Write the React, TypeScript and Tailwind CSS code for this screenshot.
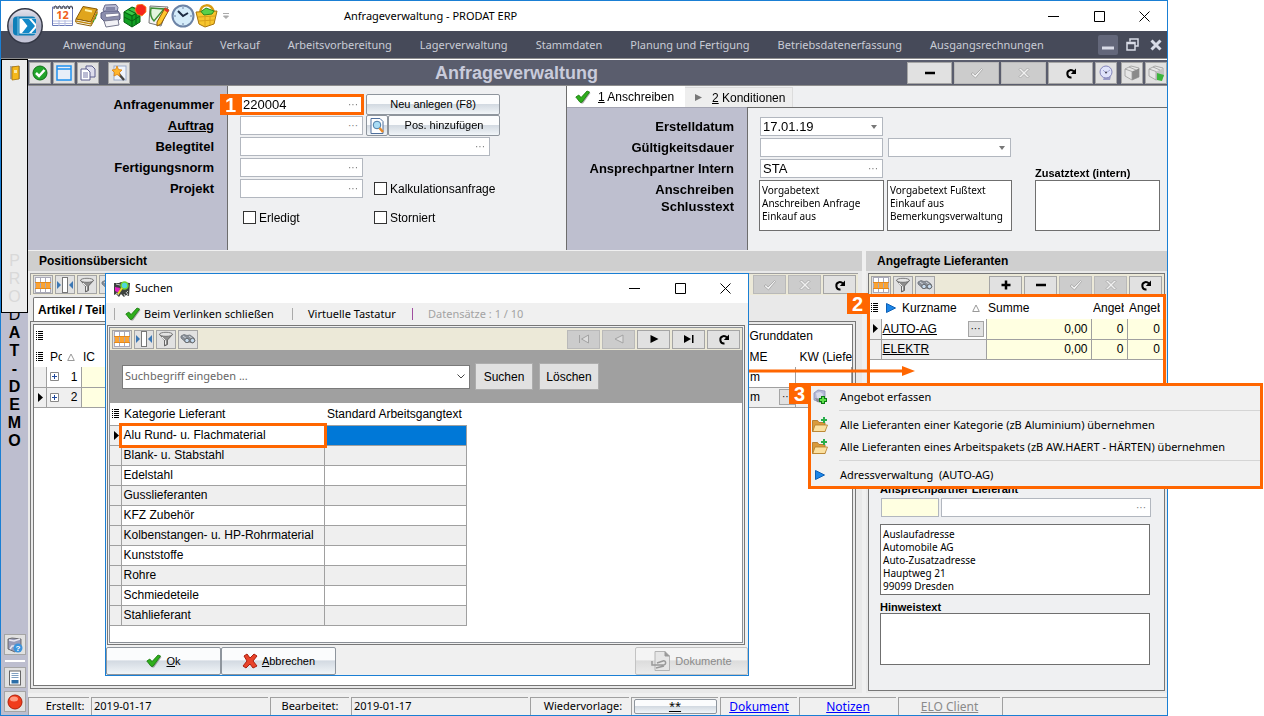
import type { ReactNode } from 'react';
import clsx from 'clsx';

const menuItems = [
  'Anwendung',
  'Einkauf',
  'Verkauf',
  'Arbeitsvorbereitung',
  'Lagerverwaltung',
  'Stammdaten',
  'Planung und Fertigung',
  'Betriebsdatenerfassung',
  'Ausgangsrechnungen',
];

const categories = [
  'Alu Rund- u. Flachmaterial',
  'Blank- u. Stabstahl',
  'Edelstahl',
  'Gusslieferanten',
  'KFZ Zubehör',
  'Kolbenstangen- u. HP-Rohrmaterial',
  'Kunststoffe',
  'Rohre',
  'Schmiedeteile',
  'Stahlieferant',
];

const suppliers = ['AUTO-AG', 'ELEKTR'];

/* ---------- icons ---------- */

function CheckGreen({ className = 'h-4 w-4' }: { className?: string }) {
  return (
    <svg viewBox="0 0 16 16" className={className}>
      <path d="M2 9l3-2 2 2.500L13 3l2.500 1L8 14.500H6z" fill="#555" opacity=".5" />
      <path d="M.8 8l3-2L6 8.600 12 2l2.600 1L7 13.300H5z" fill="#2fae1c" stroke="#17780c" strokeWidth=".8" />
    </svg>
  );
}

function CrossRed() {
  return (
    <svg viewBox="0 0 16 16" className="h-4 w-4">
      <path d="M2 3l3-2 3 4 4-4 3 2-4 5 4 5-4 2-3-4-4 4-3-2 4-5z" fill="#e8432a" stroke="#a91f10" />
    </svg>
  );
}

function GridIcon() {
  return (
    <svg viewBox="0 0 16 16" className="h-4 w-4" shapeRendering="crispEdges">
      <rect width="16" height="16" fill="#fff" />
      <rect y="5" width="16" height="6" fill="#fba333" />
      <path d="M0 .5h16M0 15.500h16M.5 0v16M5.500 0v16M10.500 0v16M15.500 0v16" stroke="#a9a9b8" />
      <path d="M0 5.500h16M0 11.500h16" stroke="#e58a1b" />
    </svg>
  );
}

function ColumnsIcon() {
  return (
    <svg viewBox="0 0 16 16" className="h-4 w-4">
      <rect x="5.500" y=".5" width="5" height="15" fill="#fff" stroke="#777" />
      <path d="M0 4l4 4-4 4zM16 4l-4 4 4 4z" fill="#3c78b4" />
    </svg>
  );
}

function FunnelIcon() {
  return (
    <svg viewBox="0 0 16 16" className="h-4 w-4">
      <path d="M1.500 3.500L6.500 9v6l3-1.500V9l5-5.500z" fill="#8e8e8e" stroke="#555" strokeWidth=".8" />
      <ellipse cx="8" cy="3.300" rx="6.500" ry="2" fill="#e4e4e4" stroke="#666" strokeWidth=".8" />
      <path d="M4 6l3.500 3.500v4" stroke="#eee" fill="none" />
    </svg>
  );
}

function BinocularsIcon() {
  return (
    <svg viewBox="0 0 16 16" className="h-4 w-4">
      <path d="M1 5l3-1.500 3 1 3-.5 4 3 1 3-2 2-4-1-3 .5L1 7z" fill="#8a9099" stroke="#6d727a" strokeWidth=".8" />
      <path d="M3 5l4 3M9 5l4 3" stroke="#d5d9de" />
      <circle cx="7" cy="9.500" r="2.200" fill="#c7dcf0" stroke="#555" strokeWidth=".8" />
      <circle cx="12.500" cy="9.500" r="2.200" fill="#c7dcf0" stroke="#555" strokeWidth=".8" />
    </svg>
  );
}

function Glyph({ name }: { name: string }) {
  const off = '#a3a3a3';
  return (
    <svg viewBox="0 0 16 16" className="h-4 w-4">
      {name === 'minus' && <path d="M3 8h10" stroke="#000" strokeWidth="2.500" />}
      {name === 'plus' && <path d="M3.500 8h9M8 3.500v9" stroke="#000" strokeWidth="2.500" />}
      {name === 'check' && (
        <path d="M2 9l2-1.500 2 2.500L12.500 3.500l1 1L6.500 13z" fill="#f0f0f0" stroke={off} strokeWidth=".8" />
      )}
      {name === 'cross' && (
        <path
          d="M3 4.500L4.500 3 8 6.500 11.500 3 13 4.500 9.500 8l3.500 3.500-1.500 1.500L8 9.500 4.500 13 3 11.500 6.500 8z"
          fill="#f0f0f0"
          stroke={off}
          strokeWidth=".8"
        />
      )}
      {name === 'refresh' && (
        <>
          <path d="M8.500 12.500C3.500 13 3 6 7 5.200c1.500-.3 3 .3 4 1.500" fill="none" stroke="#000" strokeWidth="2" />
          <path d="M13 3.500v5.500H7.800z" fill="#000" />
        </>
      )}
      {name === 'next' && <path d="M4.500 4l8 4-8 4z" />}
      {name === 'last' && <path d="M3 4l7 4-7 4zM11 4h1.500v8H11z" />}
      {name === 'first' && <path d="M3.500 4v8M12.500 4l-7 4 7 4z" fill="#ddd" stroke={off} />}
      {name === 'prev' && <path d="M12 4L4 8l8 4z" fill="#ddd" stroke={off} />}
    </svg>
  );
}

function BlueArrow() {
  return (
    <svg viewBox="0 0 10 10" className="h-2.5 w-2.5">
      <path d="M.5.5L9.500 5l-9 4.500z" fill="#1c86e8" stroke="#0c5fb5" />
    </svg>
  );
}

function RowMarker() {
  return (
    <svg viewBox="0 0 5 9" className="h-[9px] w-[5px]">
      <path d="M0 0l5 4.500L0 9z" />
    </svg>
  );
}

function ListMarker() {
  return (
    <svg viewBox="0 0 7 9" className="h-[9px] w-[7px]" shapeRendering="crispEdges">
      <path d="M0 .5h1M2 .5h5M0 2.500h1M2 2.500h5M0 4.500h1M2 4.500h5M0 6.500h1M2 6.500h5M0 8.500h1M2 8.500h5" stroke="#000" />
    </svg>
  );
}

function SortMarker() {
  return (
    <svg viewBox="0 0 8 8" className="h-2 w-2">
      <path d="M4 1l3.300 6.500H.7z" fill="none" stroke="#999" />
    </svg>
  );
}

function FolderPlus() {
  return (
    <svg viewBox="0 0 16 16" className="h-4 w-4">
      <path d="M.5 14.500v-11h5l1.500 2h6v9z" fill="#d99a3c" stroke="#a86f1d" strokeWidth=".8" />
      <path d="M.8 14.500L3 8h12.500l-2.500 6.500z" fill="#fbe0a0" stroke="#b57e28" strokeWidth=".8" />
      <path d="M12 0v6M9 3h6" stroke="#27ae4a" strokeWidth="2" />
    </svg>
  );
}

function OfferIcon() {
  return (
    <svg viewBox="0 0 16 16" className="h-4 w-4">
      <path d="M2 4l4-3 7 1v8l-5 3-6-2z" fill="#b4b8d6" stroke="#8c90b5" strokeWidth=".8" />
      <path d="M4 4l4-1 3 2-1 5-5-1z" fill="#d8daea" />
      <path d="M3 9l5 1 3 4-6-1z" fill="#8b8b95" />
      <path d="M11 7v8M7 11h8" stroke="#0a7a12" strokeWidth="4" />
      <path d="M11 8v6M8 11h6" stroke="#5fe04b" strokeWidth="2" />
    </svg>
  );
}

function SearchDialogIcon() {
  return (
    <svg viewBox="0 0 16 16" className="h-4 w-4">
      <path d="M0 2h5l2-1 9 1-1 13-3-1-2 2-3-3-2 3-3-3-2 1z" fill="#3d423f" />
      <path d="M2 3l4 1M2 12l3 2M12 11l2 3M10 13l1 2M13 10l1 1" stroke="#ccc" />
      <path d="M1 6l5 1-1 5-4-2z" fill="#e61fc3" />
      <circle cx="10.500" cy="4.500" r="3.500" fill="#4fd6d8" stroke="#6fd42a" strokeWidth="1.500" />
      <path d="M8 7l-4 6" stroke="#e8d52c" strokeWidth="2" />
    </svg>
  );
}

function SearchDoc() {
  return (
    <svg viewBox="0 0 16 16" className="h-4 w-4">
      <path d="M2 .5h9l3 3v12H2z" fill="#fff" stroke="#4f6f9c" />
      <circle cx="8" cy="7" r="3.800" fill="#a9dcf5" stroke="#4a7aa5" />
      <path d="M10.500 10l3.500 4" stroke="#e98a28" strokeWidth="2.500" />
    </svg>
  );
}

function DocumentsIcon() {
  return (
    <svg viewBox="0 0 20 20" className="h-5 w-5">
      <path d="M4 .5h10l4.500 4.500v14.500H4z" fill="#e6e6e6" stroke="#b4b4b4" />
      <path d="M14 .5v4.500h4.500" fill="#999" stroke="#999" />
      <path d="M1 10v4h11c4 0 3-5 0-4l-6 2M5 17l8-2" fill="none" stroke="#999" strokeWidth="1.500" />
    </svg>
  );
}

function Orb() {
  return (
    <svg viewBox="0 0 36 36" className="h-9 w-9">
      <defs>
        <linearGradient id="orb" x1="0" y1="0" x2="0" y2="1">
          <stop offset="0" stopColor="#e4e4ee" />
          <stop offset=".5" stopColor="#adafc5" />
          <stop offset="1" stopColor="#c8c9da" />
        </linearGradient>
      </defs>
      <circle cx="18" cy="18" r="17.200" fill="url(#orb)" stroke="#343846" strokeWidth="1.500" />
      <rect x="6" y="8.500" width="23" height="19" rx="4" fill="#0f7fb8" />
      <path d="M12.500 10.500H29v15H12.500z" fill="#fff" />
      <path d="M11 9v18" stroke="#7cc4e6" />
      <path d="M15 11h7l6 7-6 7h-7l5.500-7z" fill="#1388c8" />
      <path d="M24.500 11H29v5zM24.500 25H29v-5z" fill="#1388c8" />
    </svg>
  );
}

function CalendarIcon() {
  return (
    <svg viewBox="0 0 24 24" className="h-6 w-6">
      <path d="M1.500 3h20v18.500h-20z" fill="#fff" stroke="#6878b8" />
      <path d="M2 17h19M2 19.500h19M8 16v6M14 16v6" stroke="#b5bce0" />
      <path d="M3 5c0-4 3-4 3 0M7 5c0-4 3-4 3 0M11 5c0-4 3-4 3 0M15 5c0-4 3-4 3 0M18.500 5c0-4 3-4 3 0" fill="none" stroke="#333" />
      <text x="11.500" y="15" textAnchor="middle" fontSize="11" fontWeight="700" fill="#f0601c">
        12
      </text>
    </svg>
  );
}

function BookIcon() {
  return (
    <svg viewBox="0 0 24 24" className="h-6 w-6">
      <path d="M1 15L8 2.500 22 5l-6 13z" fill="#e0a51c" stroke="#8c5c06" />
      <path d="M1 15c-1 3 0 4 2 4.500L16 22l6-12V5l-6 13z" fill="#fff" stroke="#8c5c06" />
      <path d="M10 6l7 1.500" stroke="#fff2a8" strokeWidth="2" />
      <path d="M1 17l15 3 6-12" fill="none" stroke="#c28a10" strokeWidth="1.500" />
      <path d="M21 11l1 .5M20 14l1 .5M18 17l1 .5" stroke="#38a832" strokeWidth="2" />
    </svg>
  );
}

function PrinterIcon() {
  return (
    <svg viewBox="0 0 24 24" className="h-6 w-6">
      <path d="M6 1l11-.5 2 3-1 5H6L4 6z" fill="#b9bcd4" stroke="#6b6e8e" />
      <path d="M7 3h9v3H7z" fill="#8487a8" />
      <path d="M2 9l4-2h13l2 3v5l-2 2H5l-3-3z" fill="#8b8eae" stroke="#5a5d80" />
      <path d="M6 10l14-1v3l-13 1.500z" fill="#fff" stroke="#7b7d98" />
      <path d="M5 17l14-1.500 1 5.500-13 2z" fill="#f2f2f6" stroke="#77798f" />
    </svg>
  );
}

function CubesIcon() {
  return (
    <svg viewBox="0 0 24 24" className="h-6 w-6">
      <path d="M1 8l8-5 8 3v12l-8 5-8-5z" fill="#12a024" stroke="#076112" />
      <path d="M2 8l7-4 7 3-7 4z" fill="#3cc648" />
      <path d="M1 8l8 4v11M9 12l8-5M5 5.500l8 4v11M1 13l8 4 8-5" fill="none" stroke="#076112" />
      <path d="M14 1l5-1 4 3v5l-4 4-5-2-2-4z" fill="#f5261c" stroke="#ff8a1c" strokeWidth=".8" />
    </svg>
  );
}

function DraftIcon() {
  return (
    <svg viewBox="0 0 24 24" className="h-6 w-6">
      <path d="M3 2l18 1-7 19-12-3z" fill="#f4f4f4" stroke="#777" />
      <path d="M4 4l13 1-10 12c-3-3-4-8-3-13z" fill="#e4f4de" stroke="#3f8f36" strokeWidth="1.500" />
      <path d="M18 4l4 2-8 14-4 2v-4z" fill="#ffc62b" stroke="#8d5a05" />
      <path d="M18 4l4 2-1.500 2.500-3.500-2.500z" fill="#e4342a" />
    </svg>
  );
}

function ClockIcon() {
  return (
    <svg viewBox="0 0 24 24" className="h-6 w-6">
      <circle cx="12" cy="12" r="10.500" fill="#d5ecfa" stroke="#6c83a6" strokeWidth="2" />
      <path d="M7 7l5 5 5-3" fill="none" stroke="#1d2b42" strokeWidth="2" />
      <path d="M12 3v2M12 19v2M3 12h2M19 12h2" stroke="#6c83a6" />
    </svg>
  );
}

function BasketIcon() {
  return (
    <svg viewBox="0 0 24 24" className="h-6 w-6">
      <path d="M5 9C6-1 16-1 19 8" fill="none" stroke="#d89c12" strokeWidth="2.500" />
      <path d="M1 8l21-1-3 13-9 3-6-3z" fill="#f7c52e" stroke="#a8740a" />
      <path d="M6 7.500l5-3.500 8 3-2 3-8 1z" fill="#59d04a" stroke="#2a8a20" />
      <path d="M3 13l17-1M4 17l15-1M10 12v10M15 12v9" stroke="#d8a01a" />
    </svg>
  );
}

function SmallIcon({ name }: { name: string }) {
  return (
    <svg viewBox="0 0 16 16" className="h-4 w-4">
      {name === 'ok' && (
        <>
          <circle cx="8" cy="8" r="7" fill="#22a52c" stroke="#0f6e18" />
          <path d="M4 8l3 3 5.500-6" fill="none" stroke="#fff" strokeWidth="2.500" />
        </>
      )}
      {name === 'window' && (
        <>
          <rect x="1" y="1" width="14" height="14" fill="#e8eef8" stroke="#1e90f0" strokeWidth="1.500" />
          <path d="M1 4h14" stroke="#1e90f0" strokeWidth="1.500" />
        </>
      )}
      {name === 'copy' && (
        <>
          <path d="M6 1h6l3 3v8H6z" fill="#dcdcec" stroke="#5d5f8e" />
          <path d="M1 4h6l3 3v8H1z" fill="#fff" stroke="#5d5f8e" />
          <path d="M3 8h5M3 10h5M3 12h5" stroke="#7779a8" />
        </>
      )}
      {name === 'wand' && (
        <>
          <rect x="3" y="1" width="12" height="14" fill="#eef3fb" stroke="#9aa9c8" />
          <path d="M7 8l6 7" stroke="#444" strokeWidth="2.500" />
          <path d="M6 1l1.500 3.500L11 5 8.500 7.500 9 11 6 9.500 3 11l.5-3.500L1 5l3.500-.5z" fill="#ffb52b" stroke="#d97f0c" strokeWidth=".8" />
        </>
      )}
      {name === 'dish' && (
        <>
          <path d="M6 12l7-1-1 4H5z" fill="#9a9cc8" />
          <ellipse cx="8" cy="7" rx="6" ry="6" fill="#dfe3fa" stroke="#8486bd" />
          <path d="M5 5l3 3 4-3" fill="none" stroke="#a3a6d4" />
          <circle cx="8" cy="7.500" r="1" fill="#445" />
        </>
      )}
      {(name === 'box' || name === 'boxgo') && (
        <>
          <path d="M1 4l6-3 8 2v9l-7 3-7-4z" fill="#e6e6e6" stroke="#999" strokeWidth=".8" />
          <path d="M8 6.500l7-3V12l-7 3z" fill={name === 'box' ? '#8a8a8a' : '#c4c4c4'} />
          <path d="M1 4l7 2.500V15M5 2l7 3" fill="none" stroke="#999" strokeWidth=".8" />
          {name === 'boxgo' && <path d="M9 8l7 2-2 6-5-1z" fill="#3cb53c" />}
        </>
      )}
      {name === 'door' && (
        <>
          <path d="M3 1h10v13H3z" fill="#a8a8a8" />
          <path d="M5 2l7-1v13l-7 1z" fill="#f5b81c" stroke="#a87408" strokeWidth=".8" />
          <path d="M7 5h3v3H7z" fill="#fce9a4" />
        </>
      )}
      {name === 'help' && (
        <>
          <path d="M1 2l4-1 9 1v8l-6 5-7-3z" fill="#9a9cb8" stroke="#555" strokeWidth=".8" />
          <path d="M2 3l5 1 6-2M3 12l2-3h4" fill="none" stroke="#e8e8f2" strokeWidth="1.500" />
          <circle cx="11" cy="11" r="4.500" fill="#3b93dc" />
          <text x="11" y="14" textAnchor="middle" fontSize="8" fontWeight="700" fill="#fff">
            ?
          </text>
        </>
      )}
      {name === 'sheet' && (
        <>
          <rect x="2.500" y="1" width="11" height="14" fill="#fff" stroke="#666" />
          <path d="M4.500 3.500h7M4.500 5.500h7M4.500 7.500h7" stroke="#7f9fc0" />
          <path d="M4.500 10h7v3.500h-7z" fill="#2b6ea8" />
        </>
      )}
      {name === 'red' && (
        <>
          <circle cx="8" cy="8" r="7" fill="#f03c1c" stroke="#b01f08" />
          <ellipse cx="7" cy="5" rx="4" ry="2.500" fill="#ff9a80" />
        </>
      )}
    </svg>
  );
}

/* ---------- controls ---------- */

function ToolButton({ label, children, className }: { label: string; children: ReactNode; className?: string }) {
  return (
    <button
      aria-label={label}
      className={clsx('flex shrink-0 items-center justify-center border border-[#a5a5a5] bg-[#e1e1e1]', className ?? 'h-[19px] w-5')}
    >
      {children}
    </button>
  );
}

function NavButton({ name, disabled, wide }: { name: string; disabled?: boolean; wide?: boolean }) {
  return (
    <button
      aria-label={name}
      disabled={disabled}
      className={clsx(
        'flex shrink-0 items-center justify-center border',
        wide ? 'h-[22px] w-[45px]' : 'h-[19px] w-[33px]',
        disabled ? 'border-[#b9b9b9] bg-[#cccccc]' : 'border-[#a5a5a5] bg-[#e1e1e1]',
      )}
    >
      <Glyph name={name} />
    </button>
  );
}

function GlossButton({ children, className, disabled, label }: { children: ReactNode; className: string; disabled?: boolean; label?: string }) {
  return (
    <button
      aria-label={label}
      disabled={disabled}
      className={clsx(
        'flex items-center justify-center gap-1 rounded-xs border',
        disabled
          ? 'border-[#c3c3c3] bg-linear-to-b from-[#f4f4f4] from-45% via-[#dcdcdc] via-50% to-[#ececec] text-[#8a8a8a]'
          : 'border-[#8e959d] bg-linear-to-b from-[#fbfcfd] from-45% via-[#d3dae2] via-50% to-[#f1f5f8]',
        className,
      )}
    >
      {children}
    </button>
  );
}

type FieldProps = { id: string; value?: string; className: string; more?: boolean; focus?: boolean };

function Field({ id, value = '', className, more = true, focus }: FieldProps) {
  return (
    <div className={clsx('flex h-[19px] items-center border border-[#b2b7bf]', className)}>
      <input id={id} defaultValue={value} autoFocus={focus} className="min-w-0 flex-1 pl-0.5 text-[13px] leading-4 outline-none" />
      {more && <button aria-label="Auswahl" className="flex h-4 w-3.5 items-center text-[10px] leading-4 text-[#777]">···</button>}
    </div>
  );
}

function DropDown({ id, value }: { id: string; value: string }) {
  return (
    <div className="relative w-[123px]">
      <select id={id} className="block h-[19px] w-full appearance-none border border-[#b2b7bf] bg-white pl-0.5 text-[13px] leading-4">
        <option>{value}</option>
      </select>
      <svg viewBox="0 0 6 4" className="pointer-events-none absolute top-2 right-1.5 h-1 w-1.5">
        <path d="M0 0h6L3 4z" fill="#777" />
      </svg>
    </div>
  );
}

function Tick({ label }: { label: string }) {
  return (
    <label className="flex h-[21px] items-center gap-[3px] text-[12px]">
      <input type="checkbox" className="h-[13px] w-[13px] appearance-none border border-[#333] bg-white" />
      {label}
    </label>
  );
}

function Badge({ n, className }: { n: number; className: string }) {
  return (
    <span
      className={clsx(
        "absolute flex h-[21px] w-[21px] items-center justify-center bg-[#ff6600] font-['Liberation_Sans',sans-serif] text-[20px] leading-5 font-bold text-white",
        className,
      )}
    >
      {n}
    </span>
  );
}

function WindowButtons() {
  return (
    <div className="flex w-[102px] items-center justify-between">
      <button aria-label="Minimieren"><svg viewBox="0 0 11 11" className="h-[11px] w-[11px]"><path d="M0 5.500h11" stroke="#000" /></svg></button>
      <button aria-label="Maximieren"><svg viewBox="0 0 11 11" className="h-[11px] w-[11px]"><path d="M.5.5h10v10H.5z" fill="none" stroke="#000" /></svg></button>
      <button aria-label="Schließen"><svg viewBox="0 0 11 11" className="h-[11px] w-[11px]"><path d="M.5.5l10 10M10.500.5l-10 10" stroke="#000" /></svg></button>
    </div>
  );
}

/* ---------- sections ---------- */

function Header() {
  return (
    <header className="relative font-['Noto_Sans',sans-serif] text-[11px]">
      <button aria-label="Prodat" className="absolute top-[7px] left-1.5 z-10"><Orb /></button>
      <div className="flex h-[30px] items-center bg-white pr-[17px]">
        <div className="flex w-[343px] items-center pl-[50px]">
          <CalendarIcon />
          <BookIcon />
          <PrinterIcon />
          <CubesIcon />
          <DraftIcon />
          <ClockIcon />
          <BasketIcon />
          <svg viewBox="0 0 6 6" className="ml-1 h-1.5 w-1.5"><path d="M0 .5h6M.5 3h5L3 5.500z" fill="#aaa" stroke="#aaa" /></svg>
        </div>
        <h1 className="flex-1 text-[11px]">Anfrageverwaltung - PRODAT ERP</h1>
        <WindowButtons />
      </div>
      <nav className="flex h-[27px] items-center bg-[#464a59] pr-px pl-[62px] text-[#c9ccd6]">
        <div className="flex flex-1 gap-7 pt-0.5 whitespace-nowrap">
          {menuItems.map((item) => (
            <a key={item} href="#">{item}</a>
          ))}
        </div>
        <div className="flex items-center gap-1 text-[#d8dbe6]">
          <button aria-label="Minimieren" className="flex h-5 w-5 items-center justify-center rounded-xs bg-[#63677a]">
            <svg viewBox="0 0 12 12" className="h-3 w-3"><path d="M0 9h12" stroke="currentColor" strokeWidth="3" /></svg>
          </button>
          <button aria-label="Wiederherstellen" className="flex h-5 w-5 items-center justify-center">
            <svg viewBox="0 0 13 13" className="h-[13px] w-[13px]"><path d="M4 3.500V1h8v7H9.500M1 4.500h8V12H1zM1 5.500h8" fill="none" stroke="currentColor" strokeWidth="1.500" /></svg>
          </button>
          <button aria-label="Schließen" className="flex h-5 w-5 items-center justify-center">
            <svg viewBox="0 0 12 12" className="h-3 w-3"><path d="M1.500 1.500l9 9M10.500 1.500l-9 9" stroke="currentColor" strokeWidth="3" /></svg>
          </button>
        </div>
      </nav>
    </header>
  );
}

function Rail() {
  return (
    <aside className="flex w-[27px] shrink-0 flex-col items-center bg-[#bdbecf] pb-[3px]">
      <div className="relative z-10 flex h-[254px] w-full flex-col items-center border border-black bg-[#ececec] pt-[5px]">
        <button aria-label="Beenden"><SmallIcon name="door" /></button>
        <div className="mt-auto flex flex-col items-center pb-1.5 text-[16px] leading-[18px] text-[#d9d9d9]">
          <span>P</span><span>R</span><span>O</span>
        </div>
      </div>
      <div className="-mt-[7px] flex flex-col items-center text-[16px] leading-[18px]">
        {'DAT-DEMO'.split('').map((c, i) => (
          <span key={i} className={i > 0 ? 'font-bold' : ''}>{c}</span>
        ))}
      </div>
      <div className="mt-auto flex flex-col items-center gap-[3px]">
        <ToolButton label="Hilfe" className="h-[21px] w-[22px]"><SmallIcon name="help" /></ToolButton>
        <div className="my-0.5 h-0.5 w-5 bg-white" />
        <ToolButton label="Liste" className="h-[21px] w-[22px]"><SmallIcon name="sheet" /></ToolButton>
        <ToolButton label="Stopp" className="h-[21px] w-[22px]"><SmallIcon name="red" /></ToolButton>
      </div>
    </aside>
  );
}

function MainToolbar() {
  const btn = 'h-[22px] w-[22px]';
  return (
    <div className="flex h-[26px] items-center border-t border-white bg-[#5a5d6d] pl-px">
      <div className="flex w-[406px] gap-0.5">
        <ToolButton label="OK" className={btn}><SmallIcon name="ok" /></ToolButton>
        <ToolButton label="Fenster" className={btn}><SmallIcon name="window" /></ToolButton>
        <ToolButton label="Kopieren" className={btn}><SmallIcon name="copy" /></ToolButton>
        <ToolButton label="Assistent" className="ml-[7px] h-[22px] w-[22px]"><SmallIcon name="wand" /></ToolButton>
      </div>
      <h2 className="text-[18px] leading-6 font-bold text-[#c9cbdb]">Anfrageverwaltung</h2>
      <div className="flex flex-1 justify-end gap-0.5">
        <NavButton name="minus" wide />
        <NavButton name="check" wide disabled />
        <NavButton name="cross" wide disabled />
        <NavButton name="refresh" wide />
        <ToolButton label="Suche" className={btn}><SmallIcon name="dish" /></ToolButton>
        <ToolButton label="Paket" className="ml-0.5 h-[22px] w-[22px]"><SmallIcon name="box" /></ToolButton>
        <ToolButton label="Paket senden" className={btn}><SmallIcon name="boxgo" /></ToolButton>
      </div>
    </div>
  );
}

function RequestForm() {
  const area = 'block h-[51px] w-[125px] resize-none overflow-hidden border border-[#6f6f6f] bg-white px-0.5 pt-[3px] font-[\'Noto_Sans\',sans-serif] text-[10px] leading-[13px] outline-none';
  return (
    <section className="flex h-[165px] shrink-0 border-t border-[#8d8d8d] bg-[#eff0f2]">
      <div className="flex w-[199px] shrink-0 flex-col bg-[#bebfcf] pt-2 pr-[13px] text-right text-[13px] leading-[21px] font-bold">
        <label htmlFor="nr">Anfragenummer</label>
        <label htmlFor="auftrag" className="underline">Auftrag</label>
        <label htmlFor="titel">Belegtitel</label>
        <label htmlFor="norm">Fertigungsnorm</label>
        <label htmlFor="projekt">Projekt</label>
      </div>
      <div className="w-[340px] shrink-0 border-r border-l border-[#6d6d6d] pt-2 pl-3">
        <div className="flex gap-[3px]">
          <div className="flex flex-col gap-0.5 pt-px">
            <div className="relative">
              <Field id="nr" value="220004" className="w-[123px] bg-white" />
              <div className="pointer-events-none absolute -inset-px border-3 border-[#ff6600]" />
              <Badge n={1} className="-top-px -left-5" />
            </div>
            <Field id="auftrag" className="w-[123px] bg-white" focus />
          </div>
          <div className="w-[134px] text-[11px]">
            <GlossButton className="h-[21px] w-full">Neu anlegen (F8)</GlossButton>
            <div className="flex">
              <GlossButton className="h-[21px] w-[22px]" label="Vorschau"><SearchDoc /></GlossButton>
              <GlossButton className="h-[21px] flex-1">Pos. hinzufügen</GlossButton>
            </div>
          </div>
        </div>
        <div className="mt-px flex flex-col gap-0.5">
          <Field id="titel" className="w-[250px] bg-white" />
          <Field id="norm" className="w-[123px] bg-white" />
          <div className="flex h-[19px] items-center gap-[11px]">
            <Field id="projekt" className="w-[123px] bg-white" />
            <Tick label="Kalkulationsanfrage" />
          </div>
        </div>
        <div className="mt-[9px] flex pl-[3px]">
          <div className="w-[131px]"><Tick label="Erledigt" /></div>
          <Tick label="Storniert" />
        </div>
      </div>
      <div className="flex min-w-0 flex-1 flex-col">
        <div className="flex h-[21px] items-end text-[12px]" role="tablist">
          <button role="tab" className="flex h-[21px] w-[118px] items-center gap-[7px] bg-white pl-2">
            <CheckGreen />
            <span><u>1</u> Anschreiben</span>
          </button>
          <button role="tab" className="flex h-5 w-[108px] items-center gap-2.5 border-t border-r border-[#dcdcdc] bg-[#eeeeee] pl-2.5">
            <svg viewBox="0 0 7 7" className="h-[7px] w-[7px]"><path d="M0 0l7 3.500L0 7z" fill="#777" /></svg>
            <span><u>2</u> Konditionen</span>
          </button>
        </div>
        <div className="flex flex-1">
          <div className="flex w-[180px] shrink-0 flex-col border-t border-[#a4a5b3] bg-[#bebfcf] pt-2 pr-[13px] text-right text-[13px] leading-[21px] font-bold">
            <label htmlFor="datum">Erstelldatum</label>
            <label htmlFor="dauer">Gültigkeitsdauer</label>
            <label htmlFor="intern">Ansprechpartner Intern</label>
            <label htmlFor="anschreiben">Anschreiben</label>
            <label htmlFor="schluss" className="leading-[14px]">Schlusstext</label>
          </div>
          <div className="flex flex-1 items-start justify-between border-t border-l border-[#6d6d6d] pt-[9px] pr-[7px] pl-[11px]">
            <div className="flex flex-col gap-0.5">
              <div className="pl-px"><DropDown id="datum" value="17.01.19" /></div>
              <div className="flex gap-[5px] pl-px">
                <Field id="dauer" className="w-[123px] bg-white" more={false} />
                <DropDown id="einheit" value="" />
              </div>
              <div className="pl-px"><Field id="intern" value="STA" className="w-[123px] bg-white" /></div>
              <div className="flex gap-[3px]">
                <textarea id="anschreiben" className={area} defaultValue={'Vorgabetext\nAnschreiben Anfrage\nEinkauf aus'} />
                <textarea id="schluss" className={area} defaultValue={'Vorgabetext Fußtext\nEinkauf aus\nBemerkungsverwaltung'} />
              </div>
            </div>
            <div className="flex flex-col pt-[49px]">
              <label htmlFor="zusatz" className="text-[11px] leading-[14px] font-bold">Zusatztext (intern)</label>
              <textarea id="zusatz" className={area} />
            </div>
          </div>
        </div>
      </div>
    </section>
  );
}

function Positions() {
  const cell = 'overflow-hidden border-r border-b border-[#a0a0a0] whitespace-nowrap';
  return (
    <section className="relative flex min-w-0 flex-1 flex-col bg-[#e9e9e9]">
      <h3 className="h-5 bg-[#cfcfcf] pl-[11px] text-[12px] leading-5 font-bold">Positionsübersicht</h3>
      <div className="m-0.5 mr-1 mb-1 flex flex-1 flex-col">
        <div className="flex h-[22px] items-center gap-0.5 border-t border-l border-[#a0a0a0] bg-[#ece9d8] px-0.5">
          <ToolButton label="Tabelle"><GridIcon /></ToolButton>
          <ToolButton label="Spalten"><ColumnsIcon /></ToolButton>
          <ToolButton label="Filter"><FunnelIcon /></ToolButton>
          <ToolButton label="Suchen"><BinocularsIcon /></ToolButton>
          <div className="flex-1" />
          <NavButton name="check" disabled />
          <NavButton name="cross" disabled />
          <NavButton name="refresh" />
        </div>
        <div className="flex pt-0.5 pl-[3px]">
          <button role="tab" className="h-6 w-[110px] rounded-t-xs border border-b-0 border-[#777] bg-white pl-1 text-left text-[12px] font-bold">Artikel / Teile</button>
        </div>
        <div className="mr-0.5 flex flex-1 border border-[#777] p-0.5">
          <div className="flex-1 border border-[#777] bg-white">
            <table className="w-full table-fixed border-collapse text-[12px]">
              <colgroup>
                <col className="w-3" />
                <col className="w-[35px]" />
                <col />
                <col className="w-12" />
                <col className="w-14" />
              </colgroup>
              <thead className="text-left font-normal">
                <tr className="h-[21px]">
                  <th className="pl-0.5"><ListMarker /></th>
                  <th colSpan={2} />
                  <th colSpan={2} className="pl-0.5 font-normal whitespace-nowrap">Grunddaten</th>
                </tr>
                <tr className="h-[21px]">
                  <th className="pl-0.5"><ListMarker /></th>
                  <th className="font-normal">
                    <div className="flex items-center justify-between pr-1.5 pl-1"><span className="w-3 overflow-hidden">Pos</span><SortMarker /></div>
                  </th>
                  <th className="pl-0.5 font-normal">IC</th>
                  <th className="pl-0.5 font-normal">ME</th>
                  <th className="overflow-hidden pl-1 font-normal whitespace-nowrap">KW (Liefertermin)</th>
                </tr>
              </thead>
              <tbody>
                {[1, 2].map((n) => (
                  <tr key={n} className={clsx('h-5', n === 2 && 'bg-[#efefef]')}>
                    <td className={clsx(cell, 'bg-[#efefef] pl-1')}>{n === 2 && <RowMarker />}</td>
                    <td className={cell}>
                      <div className="flex items-center justify-between px-[3px]">
                        <svg viewBox="0 0 9 9" className="h-[9px] w-[9px]"><path d="M.5.5h8v8h-8z" fill="#fff" stroke="#888" /><path d="M2 4.500h5M4.500 2v5" stroke="#224a9c" /></svg>
                        {n}
                      </div>
                    </td>
                    <td className={clsx(cell, 'bg-[#ffffe1]')} />
                    <td className={cell}>
                      <div className="flex items-center justify-between pl-0.5">
                        m
                        {n === 2 && <button aria-label="Einheit" className="h-4 w-4 border border-[#a5a5a5] bg-[#e1e1e1] text-[10px] leading-3">···</button>}
                      </div>
                    </td>
                    <td className={cell} />
                  </tr>
                ))}
              </tbody>
            </table>
          </div>
        </div>
      </div>
      <SearchDialog />
    </section>
  );
}

function SearchDialog() {
  return (
    <div role="dialog" aria-label="Suchen" className="absolute top-[22px] left-[77px] z-10 flex h-[403px] w-[644px] flex-col border border-[#1a7fd4] bg-[#f0f0f0]">
      <div className="flex h-[29px] items-center justify-between bg-white pr-[17px] pl-2 font-['Noto_Sans',sans-serif] text-[11px]">
        <div className="flex items-center gap-[5px]"><SearchDialogIcon />Suchen</div>
        <WindowButtons />
      </div>
      <div className="flex h-[22px] items-center pl-2 font-['Noto_Sans',sans-serif] text-[11px] whitespace-nowrap">
        <span className="h-3 w-px bg-[#aaa]" />
        <button className="ml-2.5 flex w-[167px] items-center gap-[3px]"><CheckGreen />Beim Verlinken schließen</button>
        <span className="h-3 w-px bg-[#aaa]" />
        <button className="ml-[15px] w-[104px] text-left">Virtuelle Tastatur</button>
        <span className="h-3 w-px bg-[#a04fa0]" />
        <span className="ml-[15px] text-[#a3a3a3]">Datensätze : 1 / 10</span>
      </div>
      <div className="mr-[3px] ml-px flex flex-1 flex-col border border-[#777] p-px">
        <div className="flex flex-1 flex-col border border-[#8a8f96] bg-white">
          <div className="flex h-[22px] items-center gap-0.5 bg-[#ece9d8] px-0.5">
            <ToolButton label="Tabelle"><GridIcon /></ToolButton>
            <ToolButton label="Spalten"><ColumnsIcon /></ToolButton>
            <ToolButton label="Filter"><FunnelIcon /></ToolButton>
            <ToolButton label="Suchen"><BinocularsIcon /></ToolButton>
            <div className="flex-1" />
            <NavButton name="first" disabled />
            <NavButton name="prev" disabled />
            <NavButton name="next" />
            <NavButton name="last" />
            <NavButton name="refresh" />
          </div>
          <div className="flex h-[53px] items-center bg-[#a0a0a0] pl-3 text-[12px]">
            <div className="flex h-6 w-[348px] items-center border border-[#7a7a7a] bg-white pr-1 pl-0.5 font-['Noto_Sans',sans-serif]">
              <input aria-label="Suchbegriff" placeholder="Suchbegriff eingeben ..." className="min-w-0 flex-1 text-[11px] outline-none placeholder:text-[#666]" />
              <svg viewBox="0 0 8 5" className="h-[5px] w-2"><path d="M.5.5L4 4 7.500.5" fill="none" stroke="#444" /></svg>
            </div>
            <button className="ml-[5px] h-[27px] w-[58px] border border-[#adadad] bg-[#e1e1e1]">Suchen</button>
            <button className="ml-1.5 h-[27px] w-[60px] border border-[#adadad] bg-[#e1e1e1]">Löschen</button>
          </div>
          <table className="w-[356px] table-fixed border-collapse text-[12px] leading-4">
            <colgroup>
              <col className="w-[11px]" />
              <col className="w-[203px]" />
              <col className="w-[142px]" />
            </colgroup>
            <thead>
              <tr className="h-[22px] text-left">
                <th className="pl-0.5"><ListMarker /></th>
                <th className="pl-[3px] font-normal">Kategorie Lieferant</th>
                <th className="pl-[3px] font-normal whitespace-nowrap">Standard Arbeitsgangtext</th>
              </tr>
            </thead>
            <tbody>
              {categories.map((c, i) => (
                <tr key={c} className={clsx('h-5', i % 2 === 1 && 'bg-[#efefef]')}>
                  <td className="border border-l-0 border-[#a0a0a0] bg-[#efefef] pl-1">{i === 0 && <RowMarker />}</td>
                  <td className="relative border border-[#a0a0a0] pl-0.5 whitespace-nowrap">
                    {c}
                    {i === 0 && <span className="pointer-events-none absolute -inset-[3px] border-3 border-[#ff6600]" />}
                  </td>
                  <td className={clsx('border border-[#a0a0a0]', i === 0 && 'bg-[#0078d7]')} />
                </tr>
              ))}
            </tbody>
          </table>
        </div>
      </div>
      <div className="mt-0.5 flex text-[11px]">
        <GlossButton className="h-7 w-[115px]"><CheckGreen /><span><u>O</u>k</span></GlossButton>
        <GlossButton className="h-7 w-[115px]"><CrossRed /><span><u>A</u>bbrechen</span></GlossButton>
        <div className="flex-1" />
        <GlossButton className="h-7 w-[113px]" disabled><DocumentsIcon />Dokumente</GlossButton>
      </div>
    </div>
  );
}

function Suppliers() {
  const cell = 'border-r border-b border-[#a0a0a0]';
  const area = 'block w-[270px] resize-none overflow-hidden border border-[#6f6f6f] bg-white px-0.5 pt-[3px] font-[\'Noto_Sans\',sans-serif] text-[10px] leading-[13px] outline-none';
  return (
    <section className="relative ml-1 flex w-[301px] shrink-0 flex-col bg-[#e9e9e9]">
      <h3 className="h-5 bg-[#cfcfcf] pl-[11px] text-[12px] leading-5 font-bold">Angefragte Lieferanten</h3>
      <div className="m-0.5 flex flex-1 flex-col border border-[#777]">
        <div className="flex h-[22px] shrink-0 items-center gap-0.5 bg-[#ece9d8] px-0.5">
          <ToolButton label="Tabelle"><GridIcon /></ToolButton>
          <ToolButton label="Filter"><FunnelIcon /></ToolButton>
          <ToolButton label="Suchen"><BinocularsIcon /></ToolButton>
          <div className="flex-1" />
          <NavButton name="plus" />
          <NavButton name="minus" />
          <NavButton name="check" disabled />
          <NavButton name="cross" disabled />
          <NavButton name="refresh" />
        </div>
        <div className="relative h-[150px] bg-white">
          <table className="w-full table-fixed border-collapse text-[12px]">
            <colgroup>
              <col className="w-3" />
              <col className="w-[105px]" />
              <col className="w-[105px]" />
              <col className="w-9" />
              <col />
            </colgroup>
            <thead>
              <tr className="h-[23px] text-left">
                <th className="pl-0.5"><ListMarker /></th>
                <th className="font-normal">
                  <div className="flex items-center gap-1.5 pr-1.5 pl-[5px]"><BlueArrow /><span className="flex-1">Kurzname</span><SortMarker /></div>
                </th>
                <th className="pl-0.5 font-normal">Summe</th>
                <th className="pl-0.5 font-normal"><div className="w-[31px] overflow-hidden">Angebot</div></th>
                <th className="pl-0.5 font-normal"><div className="w-[31px] overflow-hidden">Angebot</div></th>
              </tr>
            </thead>
            <tbody>
              {suppliers.map((s, i) => (
                <tr key={s} className={clsx('h-5', i === 1 && 'bg-[#efefef]')}>
                  <td className={clsx(cell, 'bg-[#efefef] pl-1')}>{i === 0 && <RowMarker />}</td>
                  <td className={cell}>
                    <div className="flex items-center justify-between pr-0.5 pl-px">
                      <a href="#" className="underline">{s}</a>
                      {i === 0 && <button aria-label="Lieferant" className="h-4 w-4 border border-[#a5a5a5] bg-[#e1e1e1] text-[10px] leading-3">···</button>}
                    </div>
                  </td>
                  <td className={clsx(cell, 'bg-[#ffffe1] pr-[3px] text-right')}>0,00</td>
                  <td className={clsx(cell, 'bg-[#ffffe1] pr-[3px] text-right')}>0</td>
                  <td className={clsx(cell, 'bg-[#ffffe1] pr-[3px] text-right')}>0</td>
                </tr>
              ))}
            </tbody>
          </table>
          <div className="pointer-events-none absolute -inset-x-0.5 -top-0.5 bottom-0 border-3 border-[#ff6600]" />
          <Badge n={2} className="-top-[3px] -left-[22px]" />
        </div>
        <div className="flex flex-1 flex-col border-t border-[#777] bg-[#eff0f2] pt-[35px] pl-[11px] text-[11px]">
          <label htmlFor="kontakt" className="leading-[14px] font-bold">Ansprechpartner Lieferant</label>
          <div className="mt-0.5 flex gap-0.5 pl-px">
            <input aria-label="Kürzel" className="h-[19px] w-[58px] border border-[#b2b7bf] bg-[#ffffe1]" />
            <Field id="kontakt" className="w-[210px] bg-white" />
          </div>
          <textarea aria-label="Adresse" className={clsx(area, 'mt-[7px] h-[71px]')} defaultValue={'Auslaufadresse\nAutomobile AG\nAuto-Zusatzadresse\nHauptweg 21\n99099 Dresden'} />
          <label htmlFor="hinweis" className="mt-1.5 leading-3 font-bold">Hinweistext</label>
          <textarea id="hinweis" className={clsx(area, 'h-[52px]')} />
        </div>
      </div>
      <svg viewBox="0 0 167 10" className="absolute top-[115px] -left-[117px] z-10 h-2.5 w-[167px]">
        <path d="M0 5h154" stroke="#ff6600" strokeWidth="3" />
        <path d="M153 0l13 5-13 5z" fill="#ff6600" />
      </svg>
      <SupplierMenu />
    </section>
  );
}

function SupplierMenu() {
  const item = 'flex h-[22px] w-full items-center gap-3 text-left';
  const line = <div className="mt-0.5 mb-[3px] ml-[27px] h-px bg-[#d5d5d5]" />;
  return (
    <div className="absolute top-[132px] -left-[58px] z-20 w-[455px] border-3 border-[#ff6600] bg-[#f1f1f1] font-['Noto_Sans',sans-serif] text-[11px] whitespace-nowrap">
      <Badge n={3} className="-top-[3px] -left-[22px]" />
      <ul className="pl-px">
        <li><button className={item}><OfferIcon />Angebot erfassen</button></li>
        <li>{line}</li>
        <li><button className={item}><FolderPlus />Alle Lieferanten einer Kategorie (zB Aluminium) übernehmen</button></li>
        <li><button className={item}><FolderPlus />Alle Lieferanten eines Arbeitspakets (zB AW.HAERT - HÄRTEN) übernehmen</button></li>
        <li>{line}</li>
        <li><button className={item}><span className="flex w-4 justify-center"><BlueArrow /></span><span className="whitespace-pre">Adressverwaltung  (AUTO-AG)</span></button></li>
      </ul>
    </div>
  );
}

function StatusBar() {
  const cell = 'flex h-[18px] shrink-0 items-center justify-center border-t border-l border-[#a0a0a0]';
  return (
    <footer className="mt-1 flex gap-0.5 bg-[#f0f0f0] font-['Noto_Sans',sans-serif] text-[11px]">
      <div className={clsx(cell, 'w-[61px] pl-3')}>Erstellt:</div>
      <div className={clsx(cell, 'w-[177px] justify-start pl-0.5')}>2019-01-17</div>
      <div className={clsx(cell, 'w-[79px]')}>Bearbeitet:</div>
      <div className={clsx(cell, 'w-[177px] justify-start pl-0.5')}>2019-01-17</div>
      <div className={clsx(cell, 'w-[99px] pl-1.5')}>Wiedervorlage:</div>
      <div className={clsx(cell, 'w-[87px]')}><GlossButton className="h-[15px] w-[83px]"><u>**</u></GlossButton></div>
      <div className={clsx(cell, 'w-[77px] text-[12px]')}><a href="#" className="text-[#0000ff] underline">Dokument</a></div>
      <div className={clsx(cell, 'w-[97px] text-[12px]')}><a href="#" className="text-[#0000ff] underline">Notizen</a></div>
      <div className={clsx(cell, 'w-[102px] text-[12px]')}><a href="#" className="text-[#8a8a8a] underline">ELO Client</a></div>
      <div className="h-[18px] flex-1 border-t border-l border-[#a0a0a0]" />
    </footer>
  );
}

export default function App() {
  return (
    <div className="flex min-h-screen overflow-hidden bg-white pr-24 font-['Liberation_Sans',sans-serif] text-[12px] text-black">
      <div className="flex min-w-0 flex-1 flex-col border border-[#1a7fd4] bg-[#f0f0f0]">
        <Header />
        <div className="flex flex-1 border-t border-[#8d8d8d]">
          <Rail />
          <main className="flex min-w-0 flex-1 flex-col">
            <MainToolbar />
            <RequestForm />
            <div className="mt-px flex flex-1">
              <Positions />
              <Suppliers />
            </div>
            <StatusBar />
          </main>
        </div>
      </div>
    </div>
  );
}
